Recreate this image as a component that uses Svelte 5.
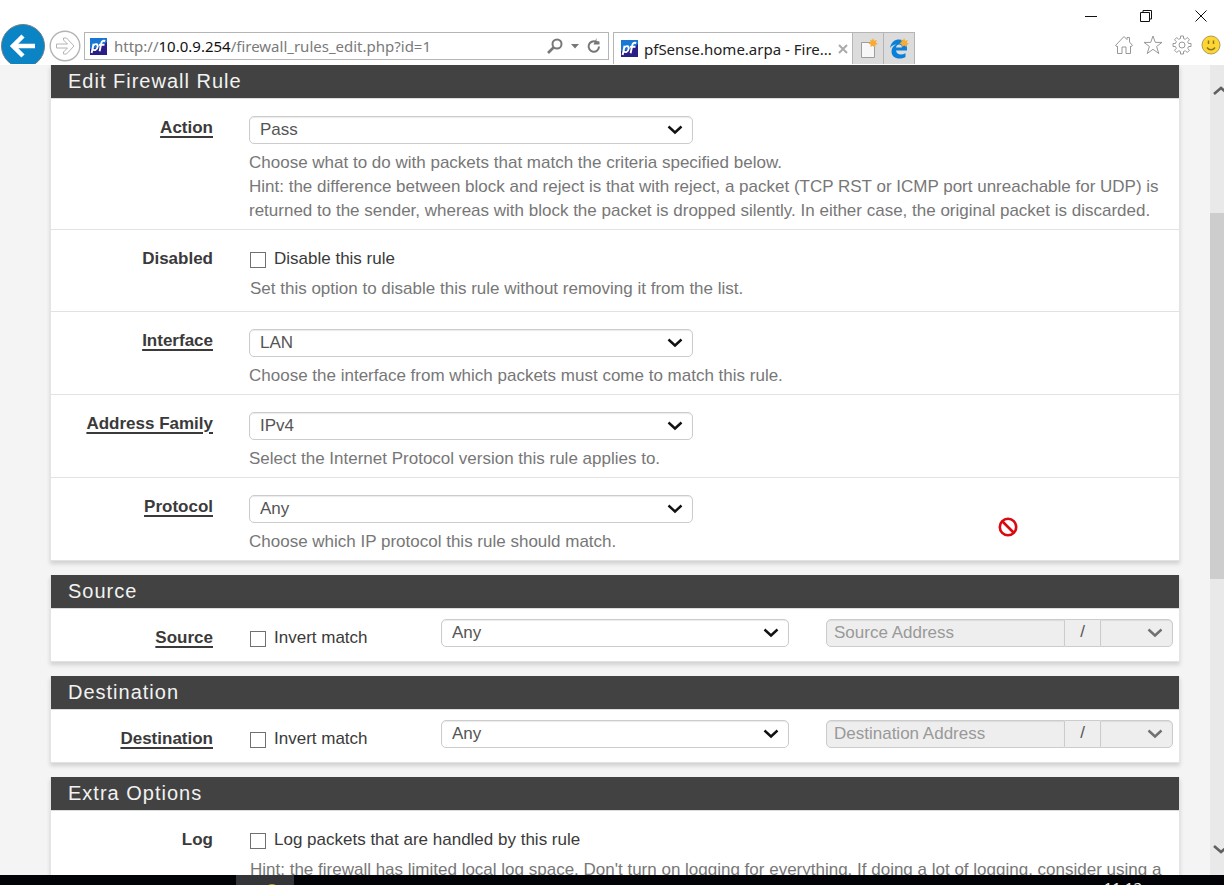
<script lang="ts">
  const general = [
    {
      id: 'action', label: 'Action', value: 'Pass',
      help: [
        'Choose what to do with packets that match the criteria specified below.',
        'Hint: the difference between block and reject is that with reject, a packet (TCP RST or ICMP port unreachable for UDP) is returned to the sender, whereas with block the packet is dropped silently. In either case, the original packet is discarded.'
      ]
    },
    { id: 'disabled', label: 'Disabled', check: 'Disable this rule', help: ['Set this option to disable this rule without removing it from the list.'] },
    { id: 'interface', label: 'Interface', value: 'LAN', help: ['Choose the interface from which packets must come to match this rule.'] },
    { id: 'family', label: 'Address Family', value: 'IPv4', help: ['Select the Internet Protocol version this rule applies to.'] },
    { id: 'protocol', label: 'Protocol', value: 'Any', help: ['Choose which IP protocol this rule should match.'] }
  ];
  const endpoints = ['Source', 'Destination'];
</script>

{#snippet chevron()}
  <svg class="chevron" viewBox="0 0 16 10" aria-hidden="true"><path d="M1.5 1.5 L8 7.5 L14.5 1.5" /></svg>
{/snippet}

{#snippet favicon()}
  <svg class="favicon" viewBox="0 0 17 17" aria-hidden="true">
    <rect width="17" height="17" fill="#2a1f87" />
    <path d="M0 0H17V4L12 8L6 10L0 11Z" fill="#1976d2" />
    <g fill="none" stroke="#fff" stroke-width="1.9">
      <path d="M3.6 5.8 L1.6 15" />
      <path d="M3.4 7.4C5 5.6 8.2 5.6 7.7 8.6C7.2 12.4 4.2 12.8 2.6 11.3" />
      <path d="M9.6 13.3L11.3 5.1C11.7 3 13 2.4 15.2 3" />
      <path d="M9 6.8H14.5" />
    </g>
  </svg>
{/snippet}

{#snippet help(lines: string[])}
  <div class="help">
    {#each lines as line}<p>{line}</p>{/each}
  </div>
{/snippet}

<div class="window">
  <header class="chrome">
    <div class="caption">
      <button aria-label="Minimize"><svg width="14" height="14" viewBox="0 0 14 14"><path d="M1 7.500H13" /></svg></button>
      <button aria-label="Restore"><svg width="14" height="14" viewBox="0 0 14 14"><path d="M1.500 3.500H10.500V12.500H1.500ZM4 3.500V1.500H12.500V10H10.500" /></svg></button>
      <button aria-label="Close"><svg width="14" height="14" viewBox="0 0 14 14"><path d="M1.500 1.500L12.500 12.500M12.500 1.500L1.500 12.500" /></svg></button>
    </div>
    <div class="toolbar">
      <button class="back" aria-label="Back">
        <svg width="46" height="46" viewBox="0 0 46 46">
          <circle cx="23" cy="23" r="21.500" fill="#0a84c4" stroke="#6d7f88" />
          <path d="M35 23H13M23 13L13 23L23 33" fill="none" stroke="#fff" stroke-width="4.500" />
        </svg>
      </button>
      <button class="forward" aria-label="Forward">
        <svg width="32" height="32" viewBox="0 0 32 32" fill="none" stroke="#b4b4b4">
          <circle cx="16" cy="16" r="14.800" stroke-width="1.400" />
          <path d="M7.500 14H18.500L14.500 10V8H17.500L25 16L17.500 24H14.500V22L18.500 18H7.500Z" />
        </svg>
      </button>
      <div class="address">
        {@render favicon()}
        <div class="url" role="textbox" aria-label="Address" tabindex="0" contenteditable="true" spellcheck="false">http://<b>10.0.9.254</b>/firewall_rules_edit.php?id=1</div>
        <button aria-label="Search"><svg width="18" height="18" viewBox="0 0 18 18" fill="none" stroke="#777"><circle cx="11" cy="7" r="4.500" stroke-width="2" /><path d="M7.500 10.500L2 16" stroke-width="2.600" /></svg></button>
        <button aria-label="Show address bar history"><svg width="8" height="5" viewBox="0 0 8 5"><path d="M0 0H8L4 4.500Z" fill="#777" /></svg></button>
        <button aria-label="Refresh"><svg width="16" height="16" viewBox="0 0 16 16"><path d="M13 8.500A5.200 5.200 0 1 1 10 3.800" fill="none" stroke="#777" stroke-width="2" /><path d="M10.500 0V3L13.500 3.500V6.500H7.500Z" fill="#777" /></svg></button>
      </div>
      <div class="tab">
        {@render favicon()}
        <span>pfSense.home.arpa - Fire...</span>
        <button aria-label="Close tab"><svg width="10" height="10" viewBox="0 0 10 10"><path d="M1 1L9 9M9 1L1 9" stroke="#aaa" stroke-width="2" /></svg></button>
      </div>
      <button class="newtab" aria-label="New tab">
        <svg width="20" height="22" viewBox="0 0 20 22">
          <path d="M3.500 4.500H12L16.500 9V19.500H3.500Z" fill="#f7f7f7" stroke="#9d9d9d" />
          <path d="M15 0L16.200 2.800L19 2L17.800 4.500L20 6L17.400 6.700L17.500 9L15.200 7.500L12.500 9L12.700 6.500L10.500 5.500L12.600 3.800L12 1.500L14 2.400Z" fill="#f8ab34" />
        </svg>
      </button>
      <button class="newtab" aria-label="Open Microsoft Edge">
        <svg width="20" height="22" viewBox="0 0 20 22">
          <path d="M1 10C2 4 6 1.500 10 1.500C15.500 1.500 18 6 18 10V12.500H7C7.500 17 12.500 17.500 16.500 15.200V19C10 22.500 2.500 20 2.500 13.500C2.500 10 4.500 7.500 7.500 6.500C4.500 6.500 2.500 8 1 10ZM7 9.500H13C13 5.500 7.500 5.500 7 9.500Z" fill="#0b80d8" />
          <path d="M15 0L16.200 2.800L19 2L17.800 4.500L20 6L17.400 6.700L17.500 9L15.200 7.500L12.500 9L12.700 6.500L10.500 5.500L12.600 3.800L12 1.500L14 2.400Z" fill="#f8ab34" />
        </svg>
      </button>
      <nav class="tools" aria-label="Browser tools">
        <button aria-label="Home"><svg width="20" height="20" viewBox="0 0 20 20"><path d="M1.500 10.500L10 1.500L13 4.500V2.500H15.500V7L18.500 10.500L17 11.500L16.500 11V18.500H12V12H8V18.500H3.500V11L3 11.500Z" /></svg></button>
        <button aria-label="Favorites"><svg width="20" height="20" viewBox="0 0 20 20"><path d="M10 1L12.300 7.400H19L13.600 11.500L15.800 18.500L10 14.300L4.200 18.500L6.400 11.500L1 7.400H7.700Z" /></svg></button>
        <button aria-label="Settings">
          <svg width="20" height="20" viewBox="0 0 20 20">
            <circle cx="10" cy="10" r="3" />
            <path d="M8.500 1H11.500V3.500L13.400 4.300L15.200 2.500L17.500 4.800L15.700 6.600L16.500 8.500H19V11.500H16.500L15.700 13.400L17.500 15.200L15.200 17.500L13.400 15.700L11.500 16.500V19H8.500V16.500L6.600 15.700L4.800 17.500L2.500 15.200L4.300 13.400L3.500 11.500H1V8.500H3.500L4.300 6.600L2.500 4.800L4.800 2.500L6.600 4.300L8.500 3.500Z" />
          </svg>
        </button>
        <button aria-label="Send feedback"><svg width="20" height="20" viewBox="0 0 20 20"><circle cx="10" cy="10" r="9" fill="#fcd734" stroke="#a99a5c" /><path d="M7.500 5.500V9M12.500 5.500V9M6 12.500C8 15.500 12 15.500 14 12.500" stroke="#92731c" stroke-width="1.500" /></svg></button>
      </nav>
    </div>
  </header>

  <div class="viewport">
    <main>
      <section class="panel">
        <h2>Edit Firewall Rule</h2>
        {#each general as field}
          <div class="row">
            <label class="name" class:required={!field.check} for={field.id}>{field.label}</label>
            <div class="control">
              {#if field.check}
                <label class="check"><input type="checkbox" id={field.id} />{field.check}</label>
              {:else}
                <div class="select half">
                  <select id={field.id}><option>{field.value}</option></select>
                  {@render chevron()}
                </div>
              {/if}
              {@render help(field.help)}
            </div>
          </div>
        {/each}
        <svg class="blocked" width="20" height="20" viewBox="0 0 20 20" aria-hidden="true"><circle cx="10" cy="10" r="8.200" /><path d="M4.500 4.500L15.500 15.500" /></svg>
      </section>

      {#each endpoints as name}
        <section class="panel">
          <h2>{name}</h2>
          <div class="row endpoint">
            <label class="name required" for={`${name}-type`}>{name}</label>
            <div class="control"><label class="check"><input type="checkbox" />Invert match</label></div>
            <div class="select type">
              <select id={`${name}-type`}><option>Any</option></select>
              {@render chevron()}
            </div>
            <div class="group">
              <input type="text" placeholder={`${name} Address`} aria-label={`${name} Address`} disabled />
              <span>/</span>
              <div class="select mask">
                <select aria-label={`${name} mask`} disabled><option></option></select>
                {@render chevron()}
              </div>
            </div>
          </div>
        </section>
      {/each}

      <section class="panel">
        <h2>Extra Options</h2>
        <div class="row">
          <label class="name" for="log">Log</label>
          <div class="control">
            <label class="check"><input type="checkbox" id="log" />Log packets that are handled by this rule</label>
            {@render help(["Hint: the firewall has limited local log space. Don't turn on logging for everything. If doing a lot of logging, consider using a"])}
          </div>
        </div>
      </section>
    </main>
    <div class="scrollbar">
      <button aria-label="Scroll up"><svg width="16" height="10" viewBox="0 0 16 10"><path d="M1 8L8 2L15 8" /></svg></button>
      <div class="track"><div class="thumb"></div></div>
      <button aria-label="Scroll down"><svg width="16" height="10" viewBox="0 0 16 10"><path d="M1 2L8 8L15 2" /></svg></button>
    </div>
  </div>

  <footer>
    <div class="task"><i></i></div>
    <time>11:12</time>
  </footer>
</div>

<style>
  :global(body) { margin: 0; }
  * { box-sizing: border-box; }
  .window {
    display: flex;
    flex-direction: column;
    height: 100vh;
    overflow: hidden;
    background: #fff;
    font: 17px/24px "Liberation Sans", Arial, sans-serif;
    color: #3a3a3a;
  }
  svg { display: block; flex: none; }
  button { display: grid; place-items: center; padding: 0; border: 0; background: none; }

  .chrome { flex: none; overflow: hidden; border-bottom: 1px solid #fff; font-family: "Noto Sans", "Segoe UI", sans-serif; }
  .caption { display: flex; justify-content: flex-end; height: 32px; padding-right: 8px; gap: 24px; }
  .caption button { width: 31px; }
  .caption path { fill: none; stroke: #111; }
  .toolbar { display: flex; height: 32px; }
  .back { align-self: flex-start; flex: none; margin-top: -9px; }
  .forward { align-self: flex-start; flex: none; margin: -2px 3px 0; }
  .address {
    display: flex;
    align-items: center;
    flex: 0 1 525px;
    min-width: 0;
    height: 28px;
    padding: 0 6px 0 5px;
    gap: 7px;
    border: 1px solid #b5b5b5;
  }
  .favicon { width: 17px; height: 17px; }
  .url { flex: 1; min-width: 0; overflow: hidden; white-space: nowrap; font-size: 15px; color: #7a7a7a; }
  .url b { font-weight: 400; color: #111; }
  .tab {
    display: flex;
    align-items: center;
    flex: none;
    width: 240px;
    margin-left: 4px;
    padding: 0 7px;
    gap: 6px;
    border: solid #b5b5b5;
    border-width: 1px 1px 0;
    font-size: 15px;
    color: #222;
  }
  .tab span { flex: 1; white-space: nowrap; }
  .newtab { flex: none; width: 31px; background: #dcdcdc; border: solid #b5b5b5; border-width: 1px 1px 0 0; }
  .tools { display: flex; gap: 9px; margin-left: auto; padding-right: 3px; height: 26px; }
  .tools svg { fill: none; stroke: #989898; }

  .viewport { display: flex; flex: 1; min-height: 0; overflow: hidden; background: #f4f4f4; }
  main { flex: 1; min-width: 0; padding: 0 30px 0 50px; }
  .panel {
    position: relative;
    margin-bottom: 14px;
    border: solid #e4e4e4;
    border-width: 0 1px;
    background: #fff;
    box-shadow: 0 3px 4px rgba(0, 0, 0, 0.14);
  }
  h2 {
    margin: 0;
    padding: 4px 17px 5px;
    border-bottom: 1px solid #ddd;
    background: #424242;
    color: #f2f2f2;
    font-size: 20px;
    font-weight: 400;
    line-height: 24px;
    letter-spacing: 1px;
  }
  .row { display: grid; grid-template-columns: 2fr 10fr; border-bottom: 1px solid #e2e2e2; }
  .name { justify-self: end; align-self: start; margin: 17px 26px 0 0; font-weight: 700; }
  .required { text-decoration: underline; text-decoration-thickness: 2px; text-underline-offset: 3px; }
  .control { padding: 17px 10px 6px; }
  .check { display: flex; align-items: center; gap: 8px; }
  .check + .help { margin-top: 6px; padding-bottom: 4px; }
  .check input {
    appearance: none;
    width: 16px;
    height: 16px;
    margin: 1px 0 0 1px;
    border: 1px solid #707070;
    background: #fff;
  }
  .help { margin-top: 7px; color: #777; }
  .check + .help { padding-left: 1px; }
  p { margin: 0; }

  .select { display: grid; align-items: center; height: 28px; }
  .half { width: calc(50% - 16px); }
  select, .chevron { grid-area: 1 / 1; }
  select, .group input {
    appearance: none;
    width: 100%;
    min-width: 0;
    height: 28px;
    padding: 0 10px;
    border: 1px solid #ccc;
    border-radius: 5px;
    background: #fff;
    box-shadow: inset 0 1px 1px rgba(0, 0, 0, 0.08);
    color: #555;
    font: inherit;
    opacity: 1;
  }
  .chevron { justify-self: end; width: 16px; height: 10px; margin-right: 10px; pointer-events: none; }
  .chevron path { fill: none; stroke: #111; stroke-width: 2.4; }

  .endpoint { grid-template-columns: 2fr 2fr 4fr 4fr; height: 53px; }
  .endpoint .control { padding-right: 0; }
  .type { margin: 10px 14px 0; }
  .group { display: flex; height: 28px; margin: 10px 6px 0 23px; }
  .group input { flex: 1; padding: 0 7px; border-radius: 5px 0 0 5px; background: #eee; }
  .group input::placeholder { color: #999; opacity: 1; }
  .group span { flex: none; width: 35px; border: solid #ccc; border-width: 1px 0; background: #eee; text-align: center; color: #555; }
  .mask { flex: none; width: 73px; }
  .mask select { border-radius: 0 5px 5px 0; background: #eee; }
  .mask .chevron path { stroke: #707070; }

  .blocked { position: absolute; right: 161px; bottom: 24px; fill: none; stroke: #d9090f; stroke-width: 2.6; }

  .scrollbar { display: flex; flex-direction: column; flex: none; width: 14px; overflow: hidden; background: #e9e9e9; }
  .scrollbar button { flex: none; height: 52px; justify-content: start; padding-left: 3px; }
  .scrollbar path { fill: none; stroke: #606060; stroke-width: 2.6; }
  .track { display: flex; flex-direction: column; flex: 1; padding-top: 96px; }
  .thumb { height: 60%; background: #cdcdcd; }

  footer { display: flex; justify-content: space-between; flex: none; height: 10px; overflow: hidden; background: #020306; padding: 0 82px 0 236px; }
  .task { width: 58px; background: #333538; overflow: hidden; }
  .task i { display: block; width: 14px; height: 14px; margin: 9px 0 0 29px; border-radius: 7px; background: #c9a800; }
  time { font: 15px/24px "Noto Sans", sans-serif; color: #eee; }
</style>
